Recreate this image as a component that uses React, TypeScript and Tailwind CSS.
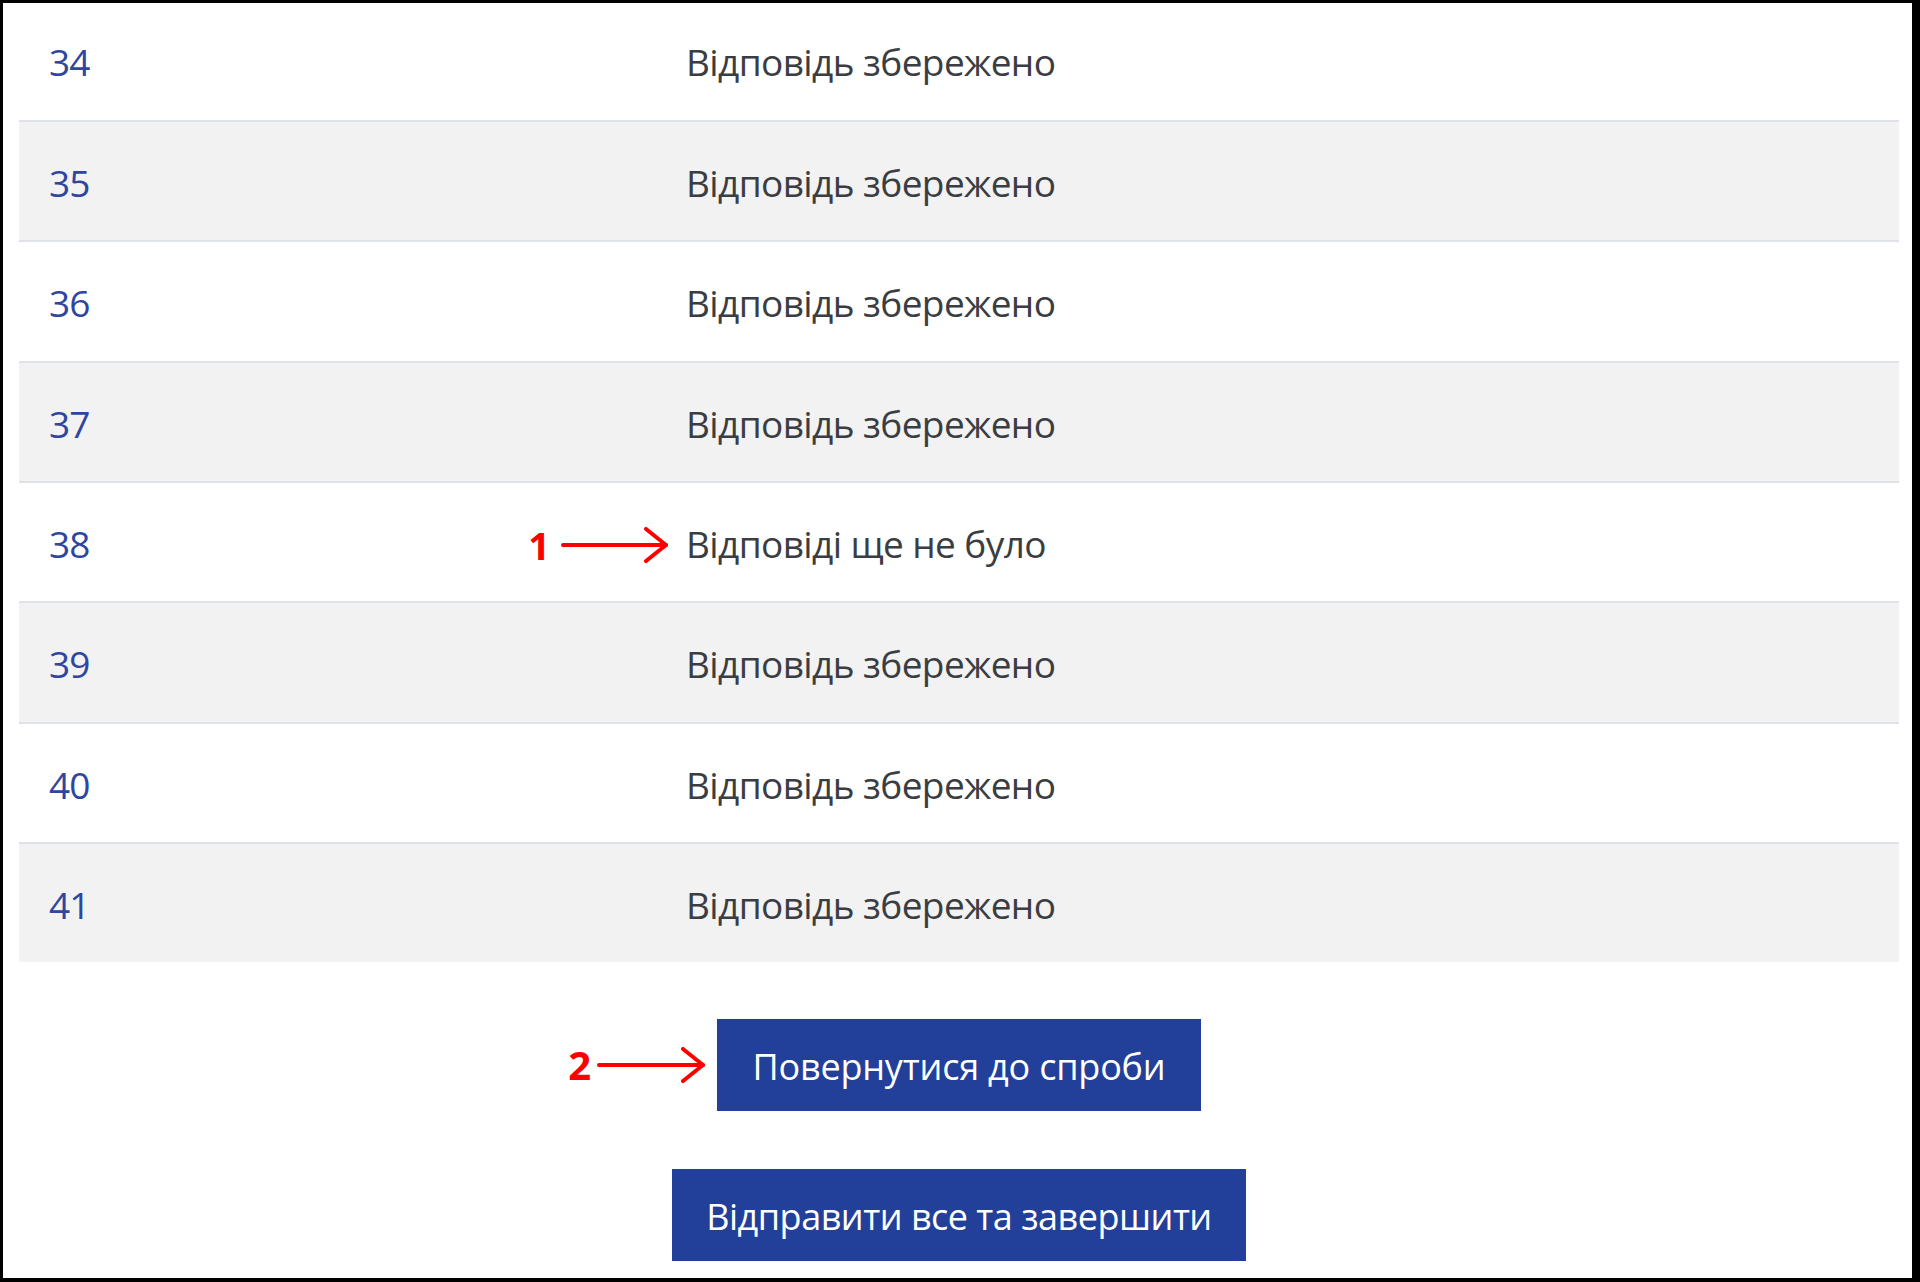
type Row = { num: number; status: string; marked?: boolean };

const rows: Row[] = [
  { num: 34, status: "Відповідь збережено" },
  { num: 35, status: "Відповідь збережено" },
  { num: 36, status: "Відповідь збережено" },
  { num: 37, status: "Відповідь збережено" },
  { num: 38, status: "Відповіді ще не було", marked: true },
  { num: 39, status: "Відповідь збережено" },
  { num: 40, status: "Відповідь збережено" },
  { num: 41, status: "Відповідь збережено" },
];

const Arrow = ({ w }: { w: number }) => (
  <svg width={w} height="36" viewBox={`0 0 ${w} 36`} fill="none">
    <line x1="2" y1="18" x2={w - 2} y2="18" stroke="#ff0000" strokeWidth="4" strokeLinecap="round" />
    <polyline
      points={`${w - 22},2 ${w - 2},18 ${w - 22},34`}
      stroke="#ff0000"
      strokeWidth="4"
      strokeLinecap="round"
      strokeLinejoin="round"
    />
  </svg>
);

const App = () => {
  return (
    <div
      className="h-[1282px] w-[1920px] overflow-hidden bg-white border-black border-t-[3px] border-l-[3px] border-r-[8px] border-b-[4px] pl-4 pr-[13px]"
      style={{ fontFamily: '"Open Sans", "Noto Sans", sans-serif' }}
    >
      {/* summary table */}
      <div>
        {rows.map((row, i) => (
          <div
            key={row.num}
            className={`flex items-center ${i === 0 ? "h-[117px] pb-[2px]" : "h-[120.33px] border-t-2 border-[#dfe2e6]"} ${
              i % 2 === 1 ? "bg-[#f2f2f2]" : "bg-white"
            }`}
          >
            <div className="w-[667px] pl-[30px] pt-[3px] text-[37px] tracking-[-1px] text-[#2e46a0]">{row.num}</div>
            <div className="relative pt-[3px] text-[37px] tracking-[-0.6px] text-[#3a3d42]">
              {row.marked && (
                <div className="absolute right-[calc(100%+18px)] top-[calc(50%+3px)] -translate-y-1/2 flex items-center gap-[11px]">
                  <span className="text-[38px] font-bold leading-none tracking-normal text-[#ff0000]">1</span>
                  <Arrow w={107} />
                </div>
              )}
              {row.status}
            </div>
          </div>
        ))}
      </div>

      {/* buttons */}
      <div className="flex flex-col items-center gap-[58px] pt-[57px]">
        <div className="relative">
          <div className="absolute right-[calc(100%+12px)] top-1/2 -translate-y-1/2 flex items-center gap-[6px]">
            <span className="text-[40px] font-bold leading-none text-[#ff0000]">2</span>
            <Arrow w={108} />
          </div>
          <button className="h-[92px] w-[484px] bg-[#22409a] pt-[3px] text-[36px] tracking-[-0.2px] text-white">
            Повернутися до спроби
          </button>
        </div>
        <button className="h-[92px] w-[574px] bg-[#22409a] pt-[3px] text-[36px] tracking-[-0.5px] text-white">
          Відправити все та завершити
        </button>
      </div>
    </div>
  );
};

export default App;
